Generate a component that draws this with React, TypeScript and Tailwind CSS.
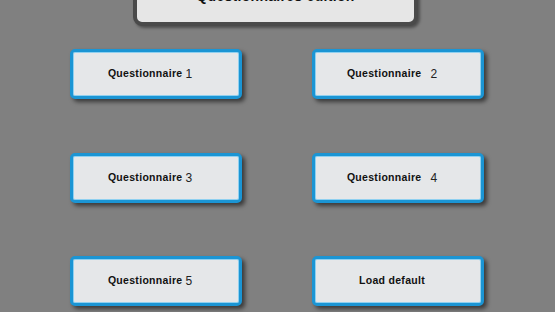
const items = [
  { label: "Questionnaire", num: "1", gap: false },
  { label: "Questionnaire", num: "2", gap: true },
  { label: "Questionnaire", num: "3", gap: false },
  { label: "Questionnaire", num: "4", gap: true },
  { label: "Questionnaire", num: "5", gap: false },
  { label: "Load default", num: "", gap: false },
];

function MenuButton({ label, num, gap }: { label: string; num: string; gap: boolean }) {
  return (
    <button className="flex h-[50px] w-[172px] items-center justify-center rounded-[5px] border-[3px] border-[#1b95d4] bg-[#e5e7e9] pr-3 text-[#111] shadow-[inset_0_0_0_1px_#8fd0f0,3px_3px_4px_rgba(0,0,0,0.55)]">
      <span className="text-[10.5px] font-bold tracking-[0.3px]">{label}</span>
      {num && (
        <span className={`${gap ? "ml-[9px]" : "ml-[3px]"} text-[12px] font-normal text-[#222]`}>{num}</span>
      )}
    </button>
  );
}

export default function App() {
  return (
    <div className="h-[312px] w-[555px] overflow-hidden bg-[#808080] font-['Liberation_Sans',Arial,sans-serif]">
      <div className="-mt-[33px] ml-[133px] flex h-[59px] w-[285px] items-center justify-center rounded-[9px] border-[4px] border-[#4a4a4a] bg-[#e6e6e6] shadow-[2px_2px_3px_rgba(0,0,0,0.4)]">
        <span className="text-[14px] font-bold tracking-[0.3px] text-[#111]">Questionnaires edition</span>
      </div>
      <div className="ml-[70px] mt-[23px] grid w-[414px] grid-cols-[172px_172px] gap-x-[70px] gap-y-[53.5px]">
        {items.map((it, i) => (
          <MenuButton key={i} {...it} />
        ))}
      </div>
    </div>
  );
}
